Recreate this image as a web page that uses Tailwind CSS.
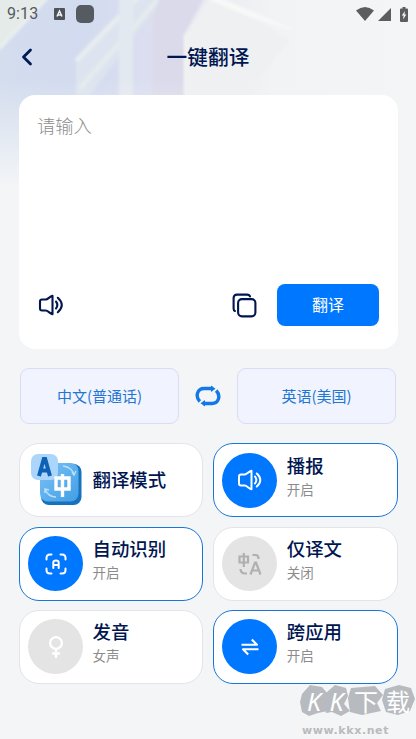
<!DOCTYPE html>
<html lang="zh-CN">
<head>
<meta charset="utf-8">
<title>一键翻译</title>
<script src="https://cdn.jsdelivr.net/npm/@tailwindcss/browser@4"></script>
</head>
<body class="w-[416px] h-[739px] overflow-hidden bg-[#f3f5f7] font-['Noto_Sans_CJK_SC',sans-serif] text-[#001650]">
<div class="relative isolate w-[416px] h-[739px] overflow-hidden">
  <!-- decorative backdrop -->
  <svg class="absolute inset-0 -z-10" width="416" height="220" viewBox="0 0 416 220">
    <defs>
      <linearGradient id="base" x1="0" y1="0" x2="416" y2="0" gradientUnits="userSpaceOnUse">
        <stop offset="0" stop-color="#d3ddee"/><stop offset=".2" stop-color="#d2dbef"/><stop offset=".38" stop-color="#dddff0"/><stop offset=".48" stop-color="#e8ebf1"/><stop offset=".66" stop-color="#f1f3f5"/><stop offset="1" stop-color="#f3f5f7"/>
      </linearGradient>
      <linearGradient id="fade" x1="0" y1="0" x2="0" y2="1"><stop offset=".36" stop-color="#f3f5f7" stop-opacity="0"/><stop offset=".85" stop-color="#f3f5f7"/></linearGradient>
      <filter id="soft" x="-20%" y="-20%" width="140%" height="140%"><feGaussianBlur stdDeviation="1.500"/></filter>
    </defs>
    <rect width="416" height="220" fill="url(#base)"/>
    <g filter="url(#soft)">
      <path d="M-5 -5H50L-5 55Z" fill="#e4ebe8"/>
      <path d="M50 -5L0 48" stroke="#edf1ef" stroke-width="3"/>
      <path d="M143 -5L76 62V95H90L128 45L165 -5Z" fill="#dde4ef"/>
      <path d="M140 -5L76 61" stroke="#e8edf0" stroke-width="5"/>
      <path d="M162 -5L80 88" stroke="#e5ebee" stroke-width="5"/>
      <path d="M119 -5H133V100H119Z" fill="#e3e9f0"/>
      <path d="M160 -5H206L185 33V100H152V20Z" fill="#dbdaeb"/>
      <path d="M206 3L185 34V100H240L290 40L215 -5Z" fill="#eef0f2"/>
      <path d="M205 -2H220L300 32L250 17Z" fill="#f8f9f8"/>
      <path d="M185 34V95" stroke="#f4f6f4" stroke-width="2"/>
    </g>
    <rect width="416" height="220" fill="url(#fade)"/>
  </svg>

  <!-- status bar -->
  <div class="flex h-[28px] items-center pl-[7px] pr-[7px] text-[#565a61]">
    <span class="w-[47px] font-['Roboto',sans-serif] text-[16px] leading-[28px] tracking-[0.1px]">9:13</span>
    <svg width="11" height="12" viewBox="0 0 11 12"><rect width="11" height="12" rx="1" fill="#4e5259"/><path d="M3 8.500L5.500 3L8 8.500M4 7H7" fill="none" stroke="#f2f4f8" stroke-width="1.500"/></svg>
    <span class="ml-[11px] size-[18px] rounded-[5px] bg-[#565a61]"></span>
    <svg class="ml-auto mr-[4px]" width="18" height="14" viewBox="0 0 18 14"><path d="M0 3.500Q9 -3.500 18 3.500L9 14Z" fill="#5c5d60"/></svg>
    <svg class="mr-[9px]" width="13" height="13" viewBox="0 0 13 13"><path d="M13 0V13H0Z" fill="#5c5d60"/></svg>
    <svg class="mr-px" width="8" height="15" viewBox="0 0 8 15"><path d="M2.500 0H5.500V1.500H7Q8 1.500 8 2.500V14Q8 15 7 15H1Q0 15 0 14V2.500Q0 1.500 1 1.500H2.500Z" fill="#5c5d60"/><path d="M5 4L1.800 8.500H3.700L3 12.500L6.300 7.500H4.400Z" fill="#fff"/></svg>
  </div>

  <!-- title bar -->
  <header class="grid h-[67px] grid-cols-[60px_1fr_60px] items-center pb-[10px]">
    <svg class="ml-[21px]" width="12" height="18" viewBox="0 0 12 18"><path d="M9.500 2L2.500 9L9.500 16" fill="none" stroke="#001a55" stroke-width="2.800" stroke-linecap="round" stroke-linejoin="round"/></svg>
    <h1 class="pb-px text-center text-[20.700px] leading-[30px] font-medium">一键翻译</h1>
  </header>

  <!-- input card -->
  <section class="mx-[18.500px] flex h-[254px] flex-col justify-between rounded-[16px] bg-white pt-[17px] pr-[18.500px] pb-[23px] pl-[18.500px]">
    <p class="text-[18.300px] leading-[26px] font-light text-[#8c8c8c]">请输入</p>
    <div class="flex items-center">
      <svg class="ml-[0.500px]" width="26" height="22" viewBox="0 0 26 22" fill="none" stroke="#001650" stroke-width="2.100" stroke-linecap="round" stroke-linejoin="round"><path d="M14.500 1.700V20.300C11.500 19.500 10 16.500 7.700 16.500H4Q2 16.500 2 14.500V7.500Q2 5.500 4 5.500H7.700C10 5.500 11.500 2.500 14.500 1.700Z"/><path d="M18 7.500Q20.700 11 18 14.500M19.800 3.800Q27.800 11 19.800 18.200"/></svg>
      <svg class="ml-auto mr-[20px]" width="25" height="25" viewBox="0 0 25 25" fill="none" stroke="#001650" stroke-width="2.100" stroke-linecap="round"><path d="M2.900 18Q1.600 17.500 1.600 15.500V5Q1.600 1.600 5 1.600H15Q17.500 1.600 18 3.500"/><rect x="6.100" y="6.100" width="17.300" height="17.300" rx="3.800"/></svg>
      <button class="h-[42px] w-[102px] rounded-[8px] bg-[#0077ff] pb-[2px] text-[16px] leading-[24px] text-white">翻译</button>
    </div>
  </section>

  <!-- language selector -->
  <div class="mx-[20px] mt-[19px] flex h-[56px] items-center justify-between text-[15px] text-[#2176d2]">
    <button class="h-[56px] w-[159px] rounded-[9px] border border-[#dadcf6] bg-[#f1f3fe]">中文(普通话)</button>
    <svg width="26" height="22" viewBox="0 0 26 22"><g fill="none" stroke="#1479e6" stroke-width="3.400"><path d="M4.800 16.500C-.2 11 2.500 3.500 9 3.500H18"/><path d="M21.200 5.500C26.200 11 23.500 18.500 17 18.500H8"/></g><path d="M16 .5L20.500 3.800L16 7.100ZM10 14.900L5.500 18.200L10 21.500Z" fill="#1479e6"/></svg>
    <button class="h-[56px] w-[159px] rounded-[9px] border border-[#dadcf6] bg-[#f1f3fe]">英语(美国)</button>
  </div>

  <!-- feature tiles -->
  <main class="mx-[18.500px] mt-[19.400px] grid grid-cols-2 gap-x-[9.500px] gap-y-[9.200px] text-[18.400px] font-medium">
    <div class="flex h-[74px] items-center rounded-[20px] border border-[#e4e4e8] bg-white pl-[11px]">
      <svg width="52" height="52" viewBox="0 0 52 52">
        <defs><linearGradient id="blueTile" x1="0" y1="0" x2="1" y2="1"><stop stop-color="#7cc2f5"/><stop offset="1" stop-color="#419ee5"/></linearGradient></defs>
        <rect x="10" y="10" width="40.500" height="41" rx="8" fill="#1772be"/><rect x="9" y="9" width="38.500" height="38.500" rx="8" fill="url(#blueTile)"/>
        <path d="M32 12Q41 13 43 21M41 18L43 21L45 17M14 35Q17 43 25 43M14 39V35L18 36" fill="none" stroke="#b5e0ff" stroke-width="1.500"/>
        <rect x="0" y="0" width="27" height="26" rx="7" fill="#acd5fb"/>
        <path d="M8 22L12.800 5H14.200L19 22M10 16.500H17" fill="none" stroke="#0e61b5" stroke-width="4"/>
        <path d="M25 24H38V35H25ZM31.500 20V43" fill="none" stroke="#fff" stroke-width="3.400"/>
      </svg>
      <span class="ml-[10px] pb-[3px] leading-[26px]">翻译模式</span>
    </div>

    <div class="flex h-[74px] items-center rounded-[20px] border border-[#1976d9] bg-white pl-[8.500px]">
      <div class="flex size-[55px] items-center justify-center rounded-full bg-[#0077ff]">
        <svg width="26" height="22" viewBox="0 0 26 22" fill="none" stroke="#fff" stroke-width="2" stroke-linecap="round" stroke-linejoin="round"><path d="M14.500 1.700V20.300C11.500 19.500 10 16.500 7.700 16.500H4Q2 16.500 2 14.500V7.500Q2 5.500 4 5.500H7.700C10 5.500 11.500 2.500 14.500 1.700Z"/><path d="M18 7.500Q20.700 11 18 14.500M19.800 4.500Q26.800 11 19.800 17.500"/></svg>
      </div>
      <div class="ml-[9.500px] pb-[9px]"><p class="leading-[26px]">播报</p><p class="text-[13.500px] leading-[22px] font-normal text-[#8b8b8b]">开启</p></div>
    </div>

    <div class="flex h-[74px] items-center rounded-[20px] border border-[#1976d9] bg-white pl-[8.500px]">
      <div class="flex size-[55px] items-center justify-center rounded-full bg-[#0077ff]">
        <svg width="22" height="22" viewBox="0 0 22 22" fill="none" stroke="#fff" stroke-width="2" stroke-linecap="round"><path d="M1.500 6.500V5Q1.500 1.500 5 1.500H6.500M15.500 1.500H17Q20.500 1.500 20.500 5V6.500M20.500 15.500V17Q20.500 20.500 17 20.500H15.500M6.500 20.500H5Q1.500 20.500 1.500 17V15.500M8.300 15V9.500Q8.300 7.500 11 7.500Q13.700 7.500 13.700 9.500V15M8.300 12H13.700"/></svg>
      </div>
      <div class="ml-[9.500px] pb-[9px]"><p class="leading-[26px]">自动识别</p><p class="text-[13.500px] leading-[22px] font-normal text-[#8b8b8b]">开启</p></div>
    </div>

    <div class="flex h-[74px] items-center rounded-[20px] border border-[#e4e4e8] bg-white pl-[8.500px]">
      <div class="flex size-[55px] items-center justify-center rounded-full bg-[#e4e4e4]">
        <svg width="24" height="24" viewBox="0 0 24 24" fill="none" stroke="#b0b0b0" stroke-width="2.200"><path d="M1.500 4.500H10V10.500H1.500ZM5.800 1V15M14.500 3H17.500Q20.500 3 20.500 7M2.500 17Q2.500 21.500 7.500 21.500H9M12.500 22.500L17 10.500H18L22.500 22.500M14.500 18.500H20.500"/></svg>
      </div>
      <div class="ml-[9.500px] pb-[9px]"><p class="leading-[26px]">仅译文</p><p class="text-[13.500px] leading-[22px] font-normal text-[#8b8b8b]">关闭</p></div>
    </div>

    <div class="flex h-[74px] items-center rounded-[20px] border border-[#e4e4e8] bg-white pl-[8.500px]">
      <div class="flex size-[55px] items-center justify-center rounded-full bg-[#e4e4e4]">
        <svg width="16" height="24" viewBox="0 0 16 24" fill="none" stroke="#fff" stroke-width="2.300"><circle cx="8" cy="8" r="5.900"/><path d="M8 14V23M4 18.500H12"/></svg>
      </div>
      <div class="ml-[9.500px] pb-[9px]"><p class="leading-[26px]">发音</p><p class="text-[13.500px] leading-[22px] font-normal text-[#8b8b8b]">女声</p></div>
    </div>

    <div class="flex h-[74px] items-center rounded-[20px] border border-[#1976d9] bg-white pl-[8.500px]">
      <div class="flex size-[55px] items-center justify-center rounded-full bg-[#0077ff]">
        <svg width="18" height="18" viewBox="0 0 18 18" fill="none" stroke="#fff" stroke-width="2.100" stroke-linejoin="round"><path d="M.5 6.800H16L10.800 1.500M17.500 11.200H2L7.200 16.500"/></svg>
      </div>
      <div class="ml-[9.500px] pb-[9px]"><p class="leading-[26px]">跨应用</p><p class="text-[13.500px] leading-[22px] font-normal text-[#8b8b8b]">开启</p></div>
    </div>
  </main>

  <!-- site mark -->
  <div class="absolute top-[683px] left-[298px] h-[56px] w-[118px]">
    <svg class="absolute inset-0" width="118" height="40" viewBox="0 -1 118 40" fill="#b7bbbf"><path d="M4 10L12 1L24 3L30 10L27 18L30 27L20 29L11 32L4 28L2 18Z"/><path d="M29 8L37 1L48 4L50 12L46 20L52 27L43 32L34 28L28 29L26 17Z"/><path d="M53 4L77 2L85 11L79 19L83 27L64 31L52 28L50 14Z"/><path d="M87 5L101 1L113 4L117 15L112 27L100 31L88 28L84 16Z"/></svg>
    <div class="relative flex h-[36px] items-center pl-[5px] text-[24px] leading-[36px] text-white">
      <span class="w-[22px] text-center font-['Noto_Sans',sans-serif] text-[25px] italic">K</span><span class="w-[23px] text-center font-['Noto_Sans',sans-serif] text-[25px] italic">K</span><span class="ml-[4px] w-[28px] text-center">下</span><span class="ml-[5px] w-[26px] text-center">载</span>
    </div>
    <p class="relative pt-[2px] pl-[4px] font-['DejaVu_Sans',sans-serif] text-[11px] leading-[20px] font-bold tracking-[0.600px] text-[#b9bbbd]">www.kkx.net</p>
  </div>
</div>
</body>
</html>
